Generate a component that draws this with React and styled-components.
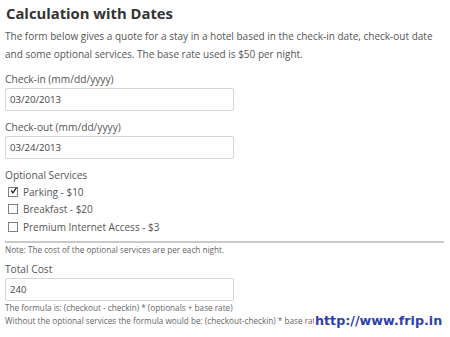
import styled, { createGlobalStyle } from "styled-components";

const GlobalStyle = createGlobalStyle`
  html, body {
    margin: 0;
    padding: 0;
    background: #fff;
  }
  body {
    font-family: "Open Sans", "Liberation Sans", sans-serif;
    color: #555;
  }
`;

const Page = styled.div`
  position: relative;
  width: 450px;
  height: 337px;
  overflow: hidden;
  padding: 0 5px;
  box-sizing: border-box;
`;

const Title = styled.h1`
  margin: 0;
  padding: 1px 0 0 1px;
  font-size: 14.8px;
  font-weight: 700;
  color: #333;
  line-height: 24px;
`;

const Intro = styled.p`
  margin: 2px 0 0;
  font-size: 10px;
  line-height: 18px;
  color: #555;
`;

const Field = styled.div`
  display: flex;
  flex-direction: column;
  margin-top: ${(p) => p.top || 9}px;
`;

const Label = styled.label`
  font-size: 10.2px;
  line-height: 14px;
  color: #555;
  margin-bottom: ${(p) => p.gap ?? 2}px;
`;

const TextBox = styled.input`
  width: 229px;
  height: 23px;
  box-sizing: border-box;
  border: 1px solid #d6d6d6;
  border-radius: 2px;
  padding: 0 4px;
  font-family: inherit;
  font-size: 9.6px;
  color: #444;
  outline: none;
`;

const Options = styled.div`
  display: flex;
  flex-direction: column;
  margin-top: 9px;
`;

const OptionRow = styled.label`
  display: flex;
  align-items: center;
  gap: 5px;
  height: 17.5px;
  padding-left: 3px;
  font-size: 10px;
  color: #555;
`;

const Box = styled.span`
  width: 8px;
  height: 8px;
  border: 1px solid #808080;
  background: #fff;
  display: flex;
  align-items: center;
  justify-content: center;
`;

const Rule = styled.hr`
  margin: 5px 0 0;
  border: none;
  border-top: 2px solid #c9c9c9;
  width: 439px;
`;

const Note = styled.div`
  font-size: 8.2px;
  line-height: 12px;
  color: #666;
  margin-top: 1px;
`;

const Small = styled.div`
  font-size: 8.2px;
  line-height: 13px;
  color: #666;
`;

const Watermark = styled.div`
  position: absolute;
  left: 314px;
  top: 313px;
  padding-left: 1px;
  background: #fff;
  font-family: "DejaVu Sans", Verdana, sans-serif;
  font-weight: 700;
  font-size: 12.7px;
  line-height: 16px;
  color: #2f3fae;
`;

function Checkbox({ label, checked }) {
  return (
    <OptionRow>
      <Box>
        {checked && (
          <svg width="9" height="9" viewBox="0 0 9 9" style={{ marginTop: -2, marginLeft: 1 }}>
            <path d="M1.5 4.5 L3.8 7.5 L8.5 0.5" fill="none" stroke="#222" strokeWidth="1.6" />
          </svg>
        )}
      </Box>
      {label}
    </OptionRow>
  );
}

export default function App() {
  return (
    <>
      <GlobalStyle />
      <Page>
        <Title>Calculation with Dates</Title>
        <Intro>
          The form below gives a quote for a stay in a hotel based in the check-in date, check-out date
          and some optional services. The base rate used is $50 per night.
        </Intro>
        <Field>
          <Label>Check-in (mm/dd/yyyy)</Label>
          <TextBox defaultValue="03/20/2013" />
        </Field>
        <Field>
          <Label>Check-out (mm/dd/yyyy)</Label>
          <TextBox defaultValue="03/24/2013" />
        </Field>
        <Options>
          <Label gap={1}>Optional Services</Label>
          <Checkbox label="Parking - $10" checked />
          <Checkbox label="Breakfast - $20" />
          <Checkbox label="Premium Internet Access - $3" />
        </Options>
        <Rule />
        <Note>Note: The cost of the optional services are per each night.</Note>
        <Field top={6}>
          <Label>Total Cost</Label>
          <TextBox defaultValue="240" />
        </Field>
        <Small>The formula is: (checkout - checkin) * (optionals + base rate)</Small>
        <Small>Without the optional services the formula would be: (checkout-checkin) * base rate</Small>
        <Watermark>http://www.frip.in</Watermark>
      </Page>
    </>
  );
}
